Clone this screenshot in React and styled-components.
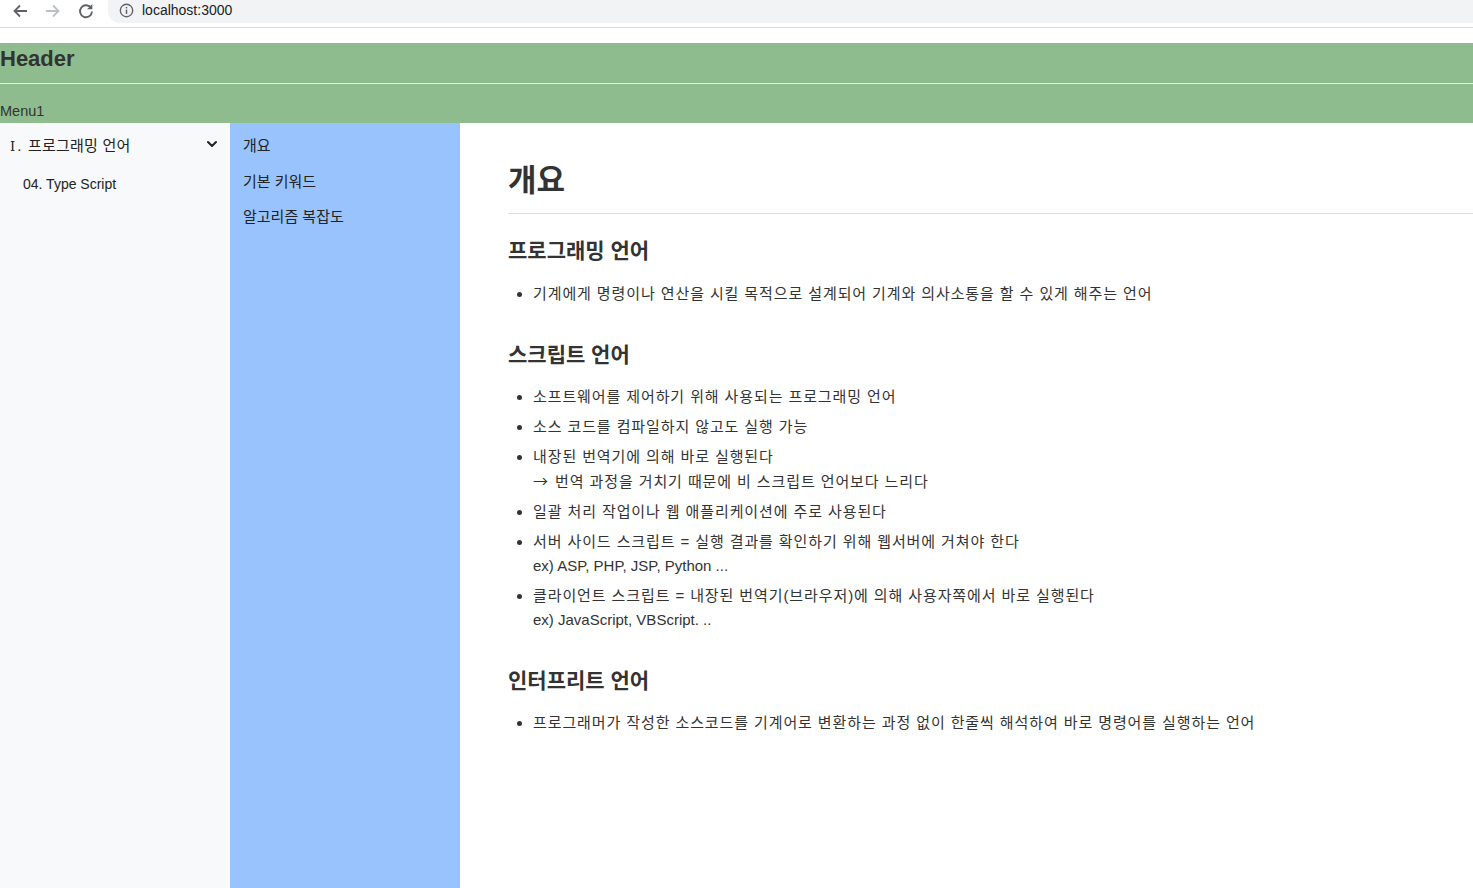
import React from "react";
import styled, { createGlobalStyle } from "styled-components";

const Global = createGlobalStyle`
  html, body { margin: 0; padding: 0; background: #fff; }
  body { font-family: "Liberation Sans", "Noto Sans CJK KR", sans-serif; color: #333; }
  * { box-sizing: border-box; }
`;

const Page = styled.div`
  display: flex;
  flex-direction: column;
  height: 888px;
  overflow: hidden;
`;

const Chrome = styled.div`
  display: flex;
  align-items: flex-start;
  height: 28px;
  border-bottom: 1px solid #dadce0;
  background: #fff;
`;

const NavButtons = styled.div`
  display: flex;
  align-items: center;
  height: 21px;
  padding-left: 12px;
`;

const NavIcon = styled.span`
  display: inline-flex;
  width: 33px;
  align-items: center;
  color: ${(p) => (p.$disabled ? "#bdc1c6" : "#5f6368")};
`;

const Omnibox = styled.div`
  flex: 1;
  height: 23px;
  margin-left: -3px;
  background: #f1f3f4;
  border-radius: 0 0 0 12px;
  display: flex;
  align-items: center;
  padding-left: 11px;
  padding-bottom: 3px;
  gap: 8px;
  font-size: 14px;
  color: #202124;
`;

const ChromeGap = styled.div`
  height: 15px;
  background: #fff;
`;

const HeaderBar = styled.header`
  background: #8fbc8f;
`;

const HeaderTitle = styled.h1`
  margin: 0;
  height: 41px;
  font-size: 22px;
  font-weight: bold;
  line-height: 32px;
  color: #333;
  border-bottom: 1px solid #e4ede4;
`;

const MenuRow = styled.nav`
  height: 39px;
  display: flex;
  align-items: flex-end;
  padding-bottom: 4px;
  font-size: 14.5px;
  color: #333;
`;

const Body = styled.div`
  flex: 1;
  display: flex;
  min-height: 0;
`;

const Sidebar = styled.aside`
  width: 230px;
  background: #f8f9fa;
  padding-top: 2px;
  color: #222;
`;

const SideItem = styled.div`
  height: 38px;
  margin-top: ${(p) => (p.$sub ? "2px" : "0")};
  display: flex;
  align-items: center;
  justify-content: space-between;
  padding-left: ${(p) => (p.$sub ? "23px" : "10px")};
  padding-right: 12px;
  font-size: ${(p) => (p.$sub ? "14px" : "15px")};
  letter-spacing: ${(p) => (p.$sub ? "0" : "0.2px")};
`;

const Numeral = styled.span`
  font-family: "DejaVu Serif", "Liberation Serif", serif;
  font-size: 13px;
  margin-right: 2px;
`;

const Dot = styled.span`
  margin-right: 2px;
`;

const SubList = styled.div`
  background: #99c3fc;
  width: 230px;
  padding: 4px 13px;
  font-size: 15px;
  color: #222;
`;

const SubItem = styled.div`
  height: 35.5px;
  display: flex;
  align-items: center;
`;

const Main = styled.main`
  flex: 1;
  padding: 38px 0 0 48px;
  color: #333;
`;

const Title = styled.h1`
  margin: 0;
  font-size: 31px;
  line-height: 40px;
  font-weight: bold;
  padding-bottom: 12px;
  border-bottom: 1px solid #dfdfdf;
`;

const SectionTitle = styled.h2`
  margin: ${(p) => (p.$first ? "22px 0 16px" : "34px 0 15px")};
  font-size: 21px;
  line-height: 30px;
  font-weight: bold;
`;

const List = styled.ul`
  margin: 0;
  padding-left: 25px;
  font-size: 15px;
  line-height: 24px;
`;

const Item = styled.li`
  & + & { margin-top: 6px; }
`;

const Line = styled.div`
  letter-spacing: ${(p) => (p.$latin ? "0" : "0.9px")};
`;

const Arrow = styled.span`
  font-family: "Noto Sans CJK KR", sans-serif;
  letter-spacing: 0;
  margin-right: 2px;
`;

const Chevron = () => (
  <svg width="12" height="8" viewBox="0 0 12 8" fill="none">
    <path d="M2 2 L6 6 L10 2" stroke="#222" strokeWidth="2" strokeLinecap="round" strokeLinejoin="round" />
  </svg>
);

const ArrowIcon = ({ flip }) => (
  <svg width="16" height="16" viewBox="0 0 16 16" fill="none" style={flip ? { transform: "scaleX(-1)" } : undefined}>
    <path d="M15 8 H2.5 M8 2.5 L2.5 8 L8 13.5" stroke="currentColor" strokeWidth="1.8" />
  </svg>
);

const ReloadIcon = () => (
  <svg width="16" height="16" viewBox="0 0 16 16" fill="none">
    <path d="M13.2 5.2 A6 6 0 1 0 14 8.5" stroke="currentColor" strokeWidth="1.9" fill="none" />
    <path d="M14.3 1 V6.2 H9.1 Z" fill="currentColor" />
  </svg>
);

const InfoIcon = () => (
  <svg width="15" height="15" viewBox="0 0 16 16" fill="none">
    <circle cx="8" cy="8" r="6.6" stroke="#5f6368" strokeWidth="1.5" />
    <rect x="7.2" y="7" width="1.6" height="4.6" fill="#5f6368" />
    <rect x="7.2" y="4.2" width="1.6" height="1.6" fill="#5f6368" />
  </svg>
);

const sections = [
  {
    title: "프로그래밍 언어",
    items: [["기계에게 명령이나 연산을 시킬 목적으로 설계되어 기계와 의사소통을 할 수 있게 해주는 언어"]],
  },
  {
    title: "스크립트 언어",
    items: [
      ["소프트웨어를 제어하기 위해 사용되는 프로그래밍 언어"],
      ["소스 코드를 컴파일하지 않고도 실행 가능"],
      ["내장된 번역기에 의해 바로 실행된다", "→ 번역 과정을 거치기 때문에 비 스크립트 언어보다 느리다"],
      ["일괄 처리 작업이나 웹 애플리케이션에 주로 사용된다"],
      ["서버 사이드 스크립트 = 실행 결과를 확인하기 위해 웹서버에 거쳐야 한다", "ex) ASP, PHP, JSP, Python ..."],
      ["클라이언트 스크립트 = 내장된 번역기(브라우저)에 의해 사용자쪽에서 바로 실행된다", "ex) JavaScript, VBScript. .."],
    ],
  },
  {
    title: "인터프리트 언어",
    items: [["프로그래머가 작성한 소스코드를 기계어로 변환하는 과정 없이 한줄씩 해석하여 바로 명령어를 실행하는 언어"]],
  },
];

const renderLine = (l) =>
  l.startsWith("→ ") ? (
    <>
      <Arrow>→</Arrow>
      {l.slice(1)}
    </>
  ) : (
    l
  );

export default function App() {
  return (
    <>
      <Global />
      <Page>
        <Chrome>
          <NavButtons>
            <NavIcon><ArrowIcon /></NavIcon>
            <NavIcon $disabled><ArrowIcon flip /></NavIcon>
            <NavIcon><ReloadIcon /></NavIcon>
          </NavButtons>
          <Omnibox>
            <InfoIcon />
            <span>localhost:3000</span>
          </Omnibox>
        </Chrome>
        <ChromeGap />
        <HeaderBar>
          <HeaderTitle>Header</HeaderTitle>
          <MenuRow>Menu1</MenuRow>
        </HeaderBar>
        <Body>
          <Sidebar>
            <SideItem>
              <span><Numeral>Ⅰ</Numeral><Dot>.</Dot> 프로그래밍 언어</span>
              <Chevron />
            </SideItem>
            <SideItem $sub>04. Type Script</SideItem>
          </Sidebar>
          <SubList>
            <SubItem>개요</SubItem>
            <SubItem>기본 키워드</SubItem>
            <SubItem>알고리즘 복잡도</SubItem>
          </SubList>
          <Main>
            <Title>개요</Title>
            {sections.map((s, i) => (
              <section key={s.title}>
                <SectionTitle $first={i === 0}>{s.title}</SectionTitle>
                <List>
                  {s.items.map((lines, j) => (
                    <Item key={j}>
                      {lines.map((l, k) => (
                        <Line key={k} $latin={l.startsWith("ex)")}>{renderLine(l)}</Line>
                      ))}
                    </Item>
                  ))}
                </List>
              </section>
            ))}
          </Main>
        </Body>
      </Page>
    </>
  );
}
